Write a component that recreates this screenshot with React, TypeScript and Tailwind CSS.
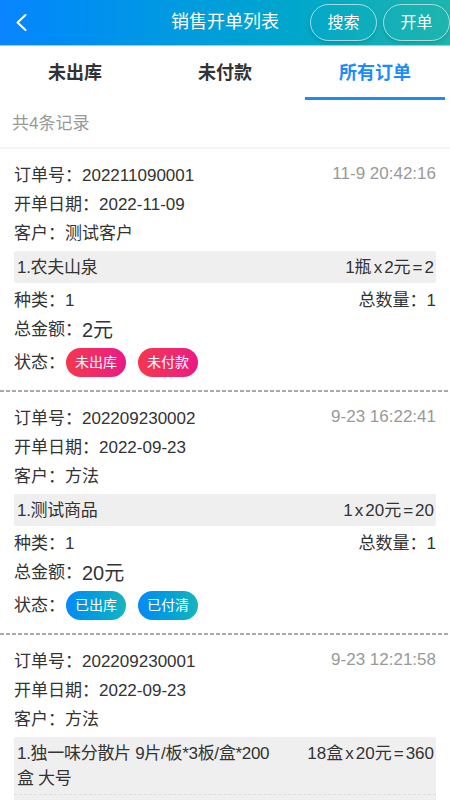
type Item = { name: string; qty: string; price: string; sum: string };
type Order = {
  no: string;
  time: string;
  date: string;
  customer: string;
  items: Item[];
  kinds: number;
  qty: number;
  total: string;
  status: { text: string; tone: "red" | "blue" }[];
};

const orders: Order[] = [
  {
    no: "202211090001",
    time: "11-9 20:42:16",
    date: "2022-11-09",
    customer: "测试客户",
    items: [{ name: "1.农夫山泉", qty: "1瓶", price: "2元", sum: "2" }],
    kinds: 1,
    qty: 1,
    total: "2元",
    status: [
      { text: "未出库", tone: "red" },
      { text: "未付款", tone: "red" },
    ],
  },
  {
    no: "202209230002",
    time: "9-23 16:22:41",
    date: "2022-09-23",
    customer: "方法",
    items: [{ name: "1.测试商品", qty: "1", price: "20元", sum: "20" }],
    kinds: 1,
    qty: 1,
    total: "20元",
    status: [
      { text: "已出库", tone: "blue" },
      { text: "已付清", tone: "blue" },
    ],
  },
  {
    no: "202209230001",
    time: "9-23 12:21:58",
    date: "2022-09-23",
    customer: "方法",
    items: [
      { name: "1.独一味分散片 9片/板*3板/盒*200盒 大号", qty: "18盒", price: "20元", sum: "360" },
      { name: "2.独一味分散片 9片/板*3板/盒*200盒 小号", qty: "1盒", price: "10元", sum: "10" },
    ],
    kinds: 2,
    qty: 19,
    total: "370元",
    status: [
      { text: "已出库", tone: "blue" },
      { text: "已付清", tone: "blue" },
    ],
  },
];

function Badge({ text, tone }: { text: string; tone: "red" | "blue" }) {
  return (
    <span
      className={
        tone === "red"
          ? "flex h-[29px] w-[60px] items-center justify-center rounded-full bg-gradient-to-r from-[#f5364c] to-[#ea1883] text-[14px] text-white"
          : "flex h-[29px] w-[60px] items-center justify-center rounded-full bg-gradient-to-r from-[#0a88f7] to-[#19b4bc] text-[14px] text-white"
      }
    >
      {text}
    </span>
  );
}

function OrderCard({ order }: { order: Order }) {
  return (
    <div className="px-[14px] pt-[12px] pb-[13px] text-[17px] text-[#333]">
      <div className="flex h-[29px] items-center justify-between leading-[29px]">
        <span>订单号：{order.no}</span>
        <span className="-mt-[5px] text-[#999]">{order.time}</span>
      </div>
      <div className="h-[29px] leading-[29px]">开单日期：{order.date}</div>
      <div className="h-[29px] leading-[29px]">客户：{order.customer}</div>
      <div className="mt-[3px] rounded-[2px] bg-[#efefef]">
        {order.items.map((it, i) => (
          <div
            key={i}
            className={
              i > 0
                ? "flex gap-7 border-t border-dashed border-[#ddd] py-[3.5px] pl-[3px] pr-[2px] leading-[25px]"
                : "flex gap-7 py-[3.5px] pl-[3px] pr-[2px] leading-[25px]"
            }
          >
            <span className="flex-1 tracking-[-0.3px]">{it.name}</span>
            <span className="shrink-0">
              {it.qty}
              <span className="mx-[2px]">x</span>
              {it.price}
              <span className="mx-[2px]">=</span>
              {it.sum}
            </span>
          </div>
        ))}
      </div>
      <div className="mt-[3px] flex h-[29px] items-center justify-between">
        <span>种类：{order.kinds}</span>
        <span>总数量：{order.qty}</span>
      </div>
      <div className="flex h-[29px] items-center">
        总金额：<span className="text-[20px]">{order.total}</span>
      </div>
      <div className="mt-[4px] flex h-[29px] items-center">
        <span className="w-[52px]">状态：</span>
        <div className="flex gap-3">
          {order.status.map((s) => (
            <Badge key={s.text} text={s.text} tone={s.tone} />
          ))}
        </div>
      </div>
    </div>
  );
}

export default function App() {
  return (
    <div
      className="h-[800px] w-[450px] overflow-hidden bg-white"
      style={{ fontFamily: '"Liberation Sans", "Noto Sans CJK SC", sans-serif' }}
    >
      <div className="flex h-[46px] items-center border-b border-[#8fd3f5] bg-gradient-to-r from-[#0a84ff] to-[#1db5ac]">
        <div className="flex w-[140px] items-center pl-[16px]">
          <svg width="11" height="17" viewBox="0 0 11 17" fill="none">
            <polyline
              points="9.5,1 1.5,8.5 9.5,16"
              stroke="white"
              strokeWidth="2"
              strokeLinecap="round"
              strokeLinejoin="round"
            />
          </svg>
        </div>
        <div className="flex-1 text-center text-[18px] text-white">销售开单列表</div>
        <div className="flex w-[140px] shrink-0 gap-[6px]">
          <button className="h-[37px] w-[67px] shrink-0 rounded-full border border-white/60 text-[16px] text-white shadow-[0_2px_4px_rgba(0,0,0,0.15)]">
            搜索
          </button>
          <button className="h-[37px] w-[67px] shrink-0 rounded-full border border-white/60 text-[16px] text-white shadow-[0_2px_4px_rgba(0,0,0,0.15)]">
            开单
          </button>
        </div>
      </div>

      <div className="grid h-[54px] grid-cols-3">
        <div className="flex items-center justify-center text-[18px] font-semibold text-[#333]">未出库</div>
        <div className="flex items-center justify-center text-[18px] font-semibold text-[#333]">未付款</div>
        <div className="relative flex items-center justify-center text-[18px] font-semibold text-[#1a8cff]">
          所有订单
          <div className="absolute bottom-0 left-1/2 h-[3px] w-[140px] -translate-x-1/2 bg-[#1a8cff]" />
        </div>
      </div>

      <div className="flex h-[47px] items-center pl-[12px] text-[17px] text-[#999]">共4条记录</div>
      <div className="h-[2px] bg-[#f5f5f5]" />

      {orders.map((o, i) => (
        <div key={o.no}>
          {i > 0 && (
            <div className="h-[2px] bg-[repeating-linear-gradient(90deg,#aaa_0_4px,transparent_4px_6px)]" />
          )}
          <OrderCard order={o} />
        </div>
      ))}
    </div>
  );
}
